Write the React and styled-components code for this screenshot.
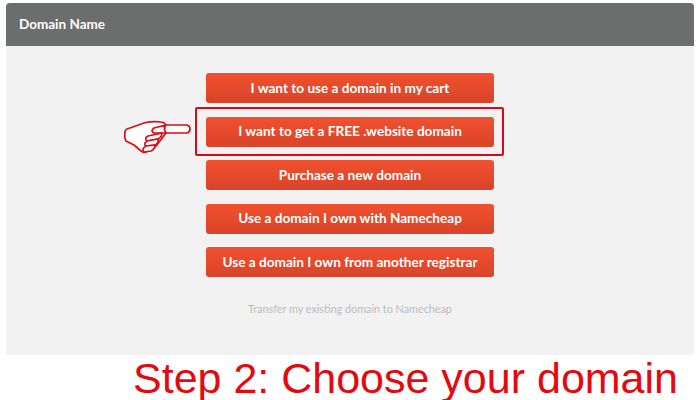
import React from 'react'
import styled, { createGlobalStyle } from 'styled-components'

const GlobalStyle = createGlobalStyle`
    html, body {
        margin: 0;
        padding: 0;
        background: #fff;
    }
`

const options = [
    'I want to use a domain in my cart',
    'I want to get a FREE .website domain',
    'Purchase a new domain',
    'Use a domain I own with Namecheap',
    'Use a domain I own from another registrar',
]

function PointingHand() {
    return (
        <HandIcon viewBox="123 119 69 36" width="69" height="36">
            <g fill="#fff" stroke="#e00a14" strokeWidth="1.7" strokeLinejoin="round" strokeLinecap="round">
                <path d="M125 132 Q125 129 130 128 L144 123 Q152 121 161 122 Q164 122 166 125 L187 125 Q190 126 190 129 Q190 132 187 133 L166 133 L156 146 L146 152 Q143 153 141 151 L134 145 L126 141 Q124 137 125 132 Z" />
                <path d="M166 125 Q163 129 166 133 L154 133 Q150 131 154 128 Z" />
                <path d="M162 133 L148 136 Q144 138 147 141 L158 139 Q162 137 162 133 Z" />
                <path d="M158 139 L147 141 Q143 144 146 146 L155 145 Q159 143 158 139 Z" />
                <path d="M155 145 L146 146 Q141 149 144 152 L151 151 Q155 149 155 145 Z" />
            </g>
        </HandIcon>
    )
}

function App() {
    return (
        <Page>
            <GlobalStyle />
            <Card>
                <CardHeader>Domain Name</CardHeader>
                <CardBody>
                    <PointingHand />
                    <Highlight />
                    <OptionList>
                        {options.map((label) => (
                            <OptionButton key={label}>{label}</OptionButton>
                        ))}
                    </OptionList>
                    <TransferLink>Transfer my existing domain to Namecheap</TransferLink>
                </CardBody>
            </Card>
            <Caption>Step 2: Choose your domain</Caption>
        </Page>
    )
}

export default App

const Page = styled.div`
    width: 700px;
    height: 400px;
    padding: 3px 6px 0;
    box-sizing: border-box;
    overflow: hidden;
    position: relative;
`

const Card = styled.div`
    height: 352px;
    background: #f2f2f2;
    border-radius: 4px;
    overflow: hidden;
    display: flex;
    flex-direction: column;
`

const CardHeader = styled.div`
    height: 43px;
    flex-shrink: 0;
    background: #6c6d6d;
    color: #fff;
    font-family: Lato, "Open Sans", sans-serif;
    font-size: 13.5px;
    font-weight: 700;
    line-height: 43px;
    padding-left: 13px;
`

const CardBody = styled.div`
    flex: 1;
    padding-top: 27px;
    display: flex;
    flex-direction: column;
    align-items: center;
`

const OptionList = styled.div`
    display: flex;
    flex-direction: column;
    gap: 13.5px;
`

const OptionButton = styled.button`
    width: 288px;
    height: 30px;
    padding: 0 0 1px;
    border: 0;
    border-radius: 3px;
    background: linear-gradient(#f1512e, #d9432a);
    color: #fff;
    font-family: Lato, "Open Sans", sans-serif;
    font-size: 13.6px;
    font-weight: 700;
    text-align: center;
`

const Highlight = styled.div`
    position: absolute;
    left: 195px;
    top: 107px;
    width: 305px;
    height: 45px;
    border: 2px solid #d9091c;
    border-radius: 2px;
`

const HandIcon = styled.svg`
    position: absolute;
    left: 123px;
    top: 119px;
`

const TransferLink = styled.div`
    margin-top: 25px;
    color: #bcbcbc;
    font-family: Lato, "Open Sans", sans-serif;
    font-size: 10.8px;
    line-height: 14px;
`

const Caption = styled.div`
    margin-top: 1px;
    padding-left: 127px;
    color: #e30a0f;
    font-family: "Liberation Sans", Arial, sans-serif;
    font-size: 43px;
    line-height: 44px;
    white-space: nowrap;
`
